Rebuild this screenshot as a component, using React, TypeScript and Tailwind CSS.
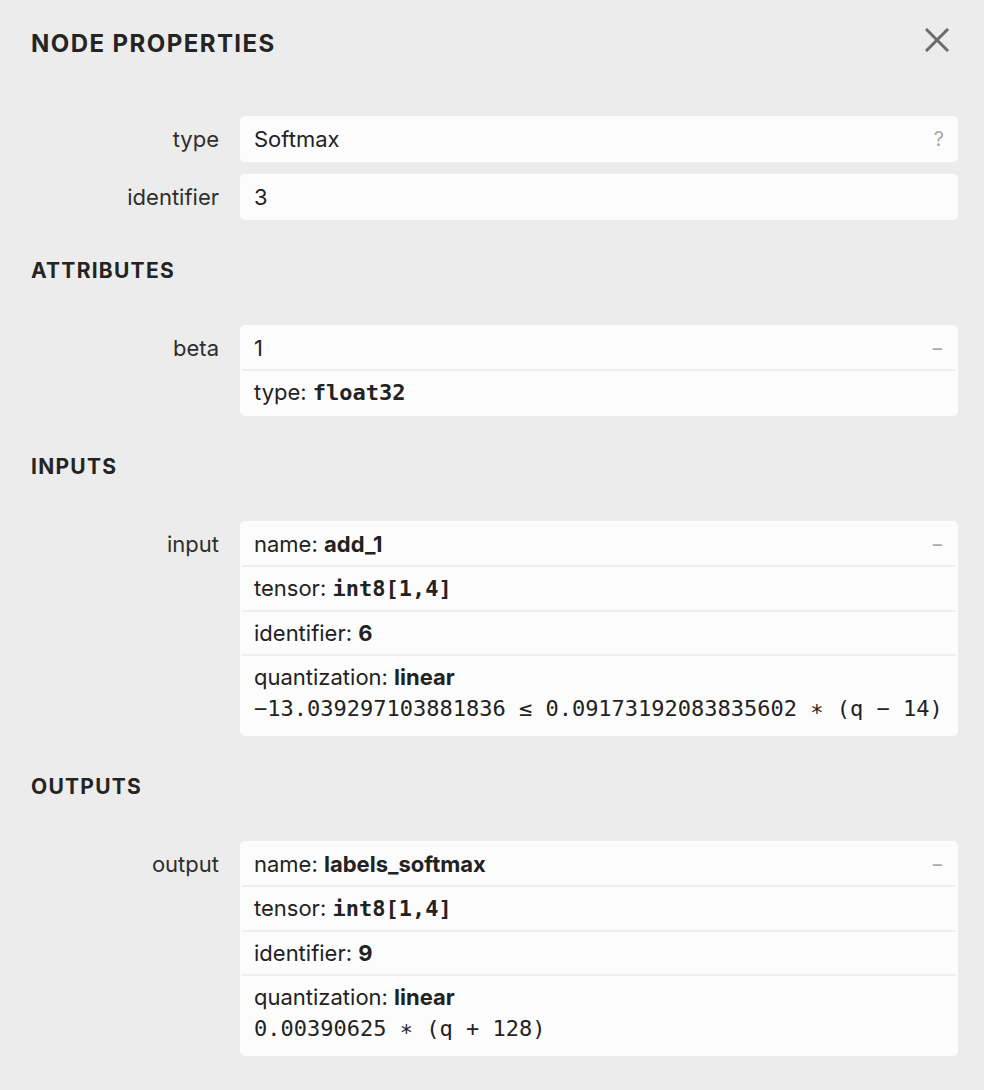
import React from "react";

const SANS = "font-['Inter','Noto_Sans',sans-serif]";
const MONO = "font-['DejaVu_Sans_Mono','Liberation_Mono',monospace]";

type Line = { key: string; content: React.ReactNode; toggle?: "?" | "−" };

function Box({ lines }: { lines: Line[] }) {
  return (
    <div className="flex-1 rounded-[5px] bg-[#fcfcfc] p-[2px]">
      {lines.map((line, i) => (
        <div
          key={line.key}
          className={`flex items-start justify-between px-[12px] py-[9px] ${i > 0 ? "border-t-2 border-[#efefef]" : ""}`}
        >
          <div className="min-w-0">{line.content}</div>
          {line.toggle && (
            <span className="ml-2 text-[20px] leading-[24px] text-[#a8a8a8]">{line.toggle}</span>
          )}
        </div>
      ))}
    </div>
  );
}

function Row({ label, lines }: { label: string; lines: Line[] }) {
  return (
    <div className="flex items-start">
      <div className="w-[188px] shrink-0 pt-[11px] text-right leading-[24px] text-[#2e2e2e]">{label}</div>
      <div className="ml-[21px] flex flex-1">
        <Box lines={lines} />
      </div>
    </div>
  );
}

function Header({ children }: { children: React.ReactNode }) {
  return (
    <div className="mt-[39px] mb-[42px] text-[21px] font-bold leading-[24px] tracking-[0.06em] text-[#242424]">
      {children}
    </div>
  );
}

const kv = (k: string, v: string, mono = false) => (
  <span>
    {k}: <b className={mono ? `${MONO} text-[22px]` : "font-bold"}>{v}</b>
  </span>
);

const quant = (expr: string) => (
  <div>
    <div>
      quantization: <b className="font-bold">linear</b>
    </div>
    <div className={`${MONO} mt-[4px] text-[22px] leading-[32px] whitespace-nowrap`}>{expr}</div>
  </div>
);

export default function App() {
  return (
    <div className={`${SANS} h-[1090px] w-[984px] bg-[#ececec] pl-[31px] pr-[26px] text-[22px] leading-[24px] text-[#222]`}>
      <div className="flex items-start justify-between pt-[30px]">
        <div className="text-[24px] font-bold leading-[28px] tracking-[0.06em] text-[#242424]">NODE PROPERTIES</div>
        <svg className="mt-[-2px] mr-[9px]" width="24" height="24" viewBox="0 0 24 24" fill="none" stroke="#6b6b6b" strokeWidth="3" strokeLinecap="square">
          <path d="M2 2 L22 22 M22 2 L2 22" />
        </svg>
      </div>

      <div className="mt-[58px] flex flex-col gap-[12px]">
        <Row label="type" lines={[{ key: "t", content: "Softmax", toggle: "?" }]} />
        <Row label="identifier" lines={[{ key: "i", content: "3" }]} />
      </div>

      <Header>ATTRIBUTES</Header>
      <Row
        label="beta"
        lines={[
          { key: "v", content: "1", toggle: "−" },
          { key: "t", content: kv("type", "float32", true) },
        ]}
      />

      <Header>INPUTS</Header>
      <Row
        label="input"
        lines={[
          { key: "n", content: kv("name", "add_1"), toggle: "−" },
          { key: "t", content: kv("tensor", "int8[1,4]", true) },
          { key: "i", content: kv("identifier", "6") },
          { key: "q", content: quant("−13.039297103881836 ≤ 0.09173192083835602 ∗ (q − 14)") },
        ]}
      />

      <Header>OUTPUTS</Header>
      <Row
        label="output"
        lines={[
          { key: "n", content: kv("name", "labels_softmax"), toggle: "−" },
          { key: "t", content: kv("tensor", "int8[1,4]", true) },
          { key: "i", content: kv("identifier", "9") },
          { key: "q", content: quant("0.00390625 ∗ (q + 128)") },
        ]}
      />
    </div>
  );
}
